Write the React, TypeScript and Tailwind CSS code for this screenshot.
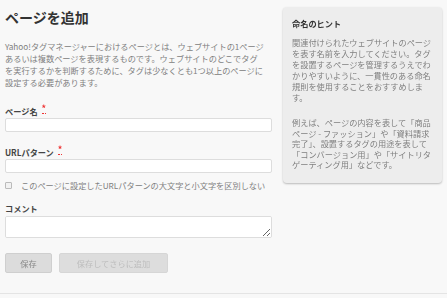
import React from "react";

const FONT = "font-['Noto_Sans_CJK_JP','Noto_Sans',sans-serif]";

function Required() {
  return (
    <abbr
      title="必須"
      className="ml-[4px] relative -top-[2px] text-[9px] text-[#e33] no-underline border-b border-dotted border-[#e33] leading-none"
    >
      *
    </abbr>
  );
}

export default function App() {
  return (
    <div className={`w-[447px] h-[298px] overflow-hidden bg-[#f8f8f8] flex flex-col ${FONT}`}>
      <div className="h-[294px] border-b border-[#e4e4e4] flex pl-[5px]">
        {/* Form */}
        <div className="w-[267px] flex flex-col">
          <h1 className="mt-[8px] text-[14px] leading-[18px] font-bold text-[#333]">ページを追加</h1>
          <p className="mt-[14px] text-[8.2px] leading-[12px] text-[#808080]">
            Yahoo!タグマネージャーにおけるページとは、ウェブサイトの1ページ
            <br />
            あるいは複数ページを表現するものです。ウェブサイトのどこでタグ
            <br />
            を実行するかを判断するために、タグは少なくとも1つ以上のページに
            <br />
            設定する必要があります。
          </p>

          <label className="mt-[17px] text-[8.2px] leading-[12px] font-bold text-[#444] flex items-center">
            ページ名
            <Required />
          </label>
          <input className="mt-[1px] h-[14px] w-full bg-white border border-[#ddd] rounded-[2px]" />

          <label className="mt-[14px] text-[8.2px] leading-[12px] font-bold text-[#444] flex items-center">
            URLパターン
            <Required />
          </label>
          <input className="mt-[1px] h-[14px] w-full bg-white border border-[#ddd] rounded-[2px]" />

          <div className="mt-[6px] flex items-center h-[12px]">
            <span className="w-[7px] h-[7px] border border-[#bbb] bg-[#f2f2f2] rounded-[1px]" />
            <span className="ml-[9px] text-[8.2px] text-[#808080]">
              このページに設定したURLパターンの大文字と小文字を区別しない
            </span>
          </div>

          <label className="mt-[11px] text-[8.2px] leading-[12px] font-bold text-[#444]">コメント</label>
          <textarea className="mt-[2px] h-[22px] w-full bg-white border border-[#ddd] rounded-[2px] block" />

          <div className="mt-[15px] flex gap-[7px]">
            <button className="w-[47px] h-[20px] bg-[#dcdcdc] border border-[#cfcfcf] rounded-[2px] text-[8.2px] text-[#888]">
              保存
            </button>
            <button className="w-[109px] h-[20px] bg-[#dddddd] border border-[#d6d6d6] rounded-[2px] text-[8.2px] text-[#bdbdbd]">
              保存してさらに追加
            </button>
          </div>
        </div>

        {/* Hint panel */}
        <aside className="ml-[11px] mt-[7px] w-[159px] h-[176px] bg-[#ededed] rounded-[4px] shadow-[0_1px_2px_rgba(0,0,0,0.25)] pl-[9px] pr-[6px] pt-[10px]">
          <h2 className="text-[8.2px] leading-[12px] font-bold text-[#333]">命名のヒント</h2>
          <p className="mt-[8px] text-[8.2px] leading-[11px] text-[#808080]">
            関連付けられたウェブサイトのページ
            <br />
            を表す名前を入力してください。タグ
            <br />
            を設置するページを管理するうえでわ
            <br />
            かりやすいように、一貫性のある命名
            <br />
            規則を使用することをおすすめしま
            <br />
            す。
          </p>
          <p className="mt-[14px] text-[8.2px] leading-[10.5px] text-[#808080]">
            例えば、ページの内容を表して「商品
            <br />
            ページ - ファッション」や「資料請求
            <br />
            完了」、設置するタグの用途を表して
            <br />
            「コンバージョン用」や「サイトリタ
            <br />
            ゲーティング用」などです。
          </p>
        </aside>
      </div>
    </div>
  );
}
